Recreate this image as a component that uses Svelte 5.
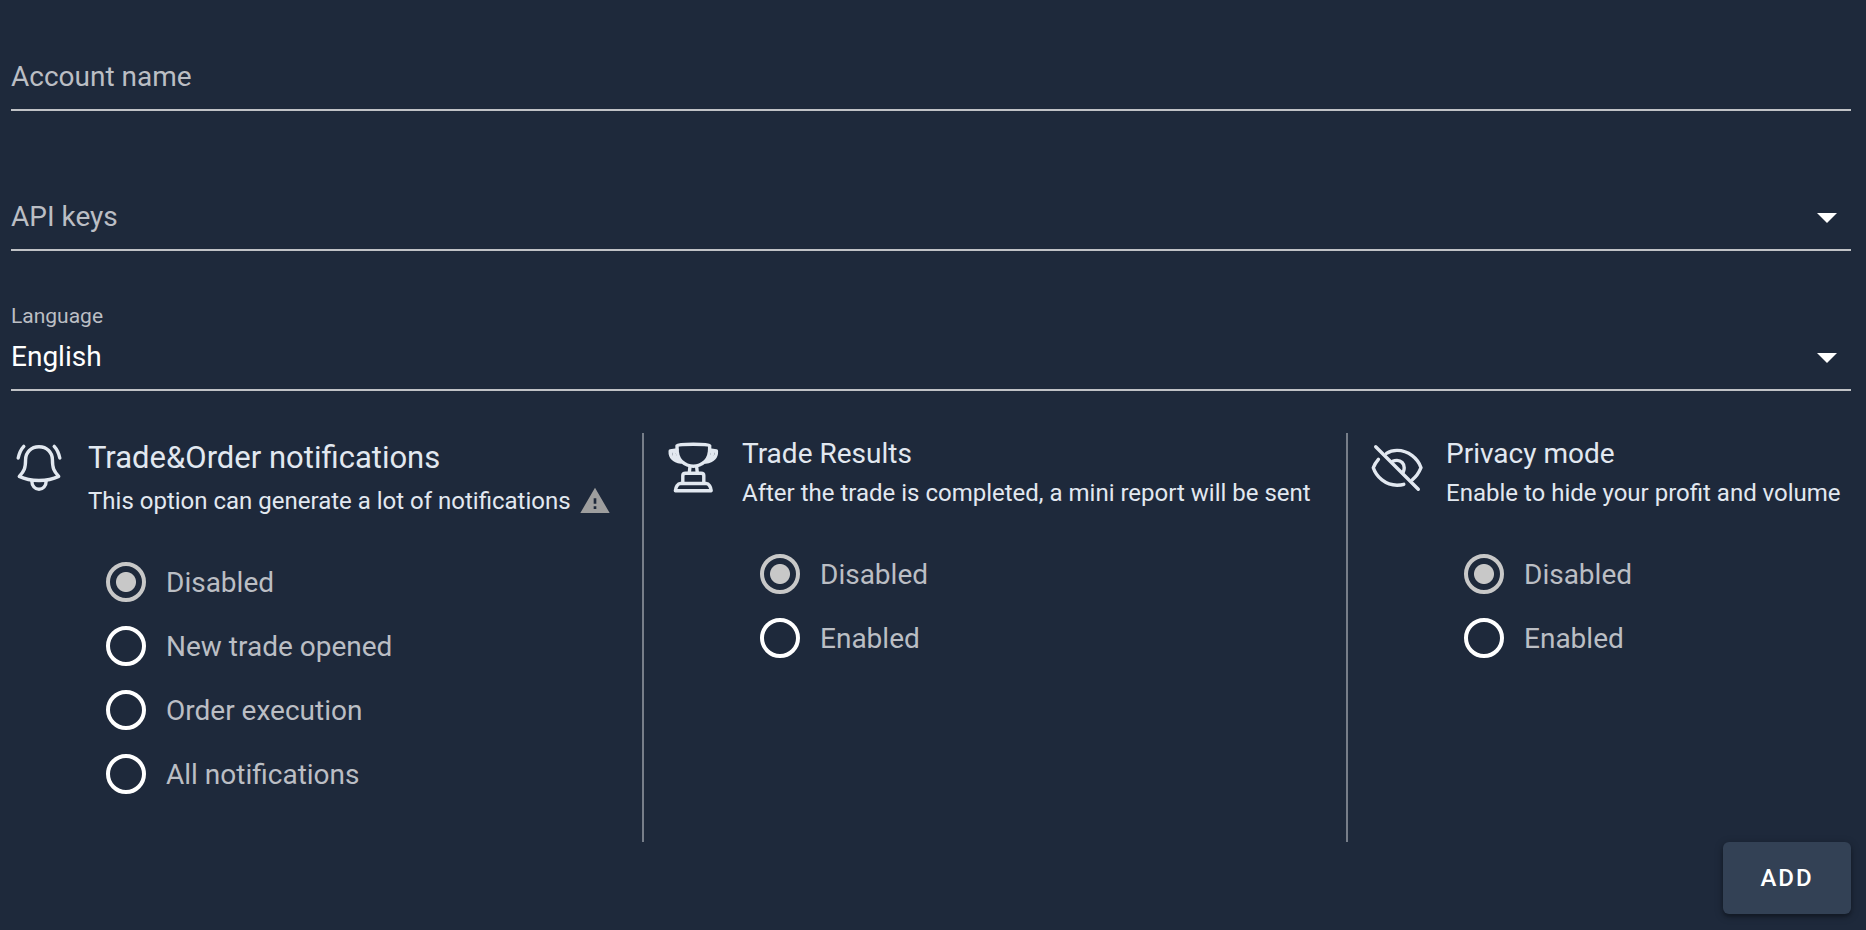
<script>
  let accountName = $state('');
  let apiKey = $state('');
  let language = $state('English');

  let sections = $state([
    {
      id: 'orders',
      icon: 'bell',
      title: 'Trade&Order notifications',
      text: 'This option can generate a lot of notifications',
      large: true,
      warning: true,
      options: ['Disabled', 'New trade opened', 'Order execution', 'All notifications'],
      value: 'Disabled'
    },
    {
      id: 'results',
      icon: 'trophy',
      title: 'Trade Results',
      text: 'After the trade is completed, a mini report will be sent',
      options: ['Disabled', 'Enabled'],
      value: 'Disabled'
    },
    {
      id: 'privacy',
      icon: 'eye',
      title: 'Privacy mode',
      text: 'Enable to hide your profit and volume',
      options: ['Disabled', 'Enabled'],
      value: 'Disabled'
    }
  ]);
</script>

{#snippet arrow()}
  <svg class="arrow" viewBox="0 0 24 24" aria-hidden="true"><path d="M7 10l5 5 5-5z" /></svg>
{/snippet}

{#snippet picture(name)}
  <svg class="picture" viewBox="0 0 56 56" aria-hidden="true">
    {#if name === 'bell'}
      <path d="M28 6.7C20 6.7 14.7 12.4 14.6 19.5C14.5 28 13.4 31 8.3 36.4C14 39.2 21 40.5 28 40.5S42 39.2 47.7 36.4C42.6 31 41.5 28 41.4 19.5C41.3 12.4 36 6.7 28 6.7Z" />
      <path d="M20.8 40.8C20.8 46 24 49.3 28 49.3S35.2 46 35.2 40.8" />
      <path d="M12.8 6.4C9.8 9.6 8.2 13.4 7.2 18M43.2 6.4C46.2 9.6 47.8 13.4 48.8 18" />
    {:else if name === 'trophy'}
      <path d="M12 5.8C13 4.5 20 4.2 28.3 4.2S43.7 4.5 44.7 5.8C45 14 43.5 18.5 40 21.5C37 24.2 33 26.2 28.3 26.2S19.7 24.2 16.7 21.5C13.2 18.5 11.7 14 12 5.8Z" />
      <path d="M12 10L5.2 11C5 16.5 8 20.8 16 22M12 10L9 12C9 15 11 18.5 14.5 20M44.6 10L51.4 11C51.6 16.5 48.6 20.8 40.6 22M44.6 10L47.6 12C47.6 15 45.6 18.5 42.1 20" />
      <path d="M25 26.4L24.3 32.8M31.6 26.4L32.3 32.8" />
      <path d="M17.8 43V35.5C17.8 34 19 33.3 20.5 33.3H36.1C37.6 33.3 38.8 34 38.8 35.5V43" />
      <path d="M15.5 43.5H41.1C43.8 43.5 46 47 46.2 50.7H10.4C10.6 47 12.8 43.5 15.5 43.5Z" />
    {:else}
      <path d="M6.7 6.7L49.3 49.3" />
      <path d="M17.5 13.4C20.5 11.4 24 10.4 28 10.4C39.5 10.4 49 18.5 52 27.7C50 32.5 47.3 36.7 43.5 39.6" />
      <path d="M9.4 19.3C7 22 5.3 24.8 4.3 27.8C7.3 37 16.5 45.2 28 45.2C30.5 45.2 32.8 45 34.8 44.3" />
      <path d="M23.6 21.3C25.2 20.6 26.5 20.4 28 20.4C32.2 20.4 35.2 23.6 35.2 27.8C35.2 29.3 35 30.6 34.3 32" />
    {/if}
  </svg>
{/snippet}

<form onsubmit={(event) => event.preventDefault()}>
  <div class="fields">
    <div class="field" class:filled={accountName}>
      <label for="account">Account name</label>
      <input id="account" type="text" bind:value={accountName} />
    </div>

    <div class="field" class:filled={apiKey}>
      <label for="keys">API keys</label>
      <select id="keys" bind:value={apiKey}>
        <option value=""></option>
      </select>
      {@render arrow()}
    </div>

    <div class="field" class:filled={language}>
      <label for="language">Language</label>
      <select id="language" bind:value={language}>
        <option>English</option>
      </select>
      {@render arrow()}
    </div>
  </div>

  <div class="sections">
    {#each sections as section (section.id)}
      <section>
        {@render picture(section.icon)}
        <div class="body">
          <h2 id={section.id} class:large={section.large}>{section.title}</h2>
          <p>
            {section.text}
            {#if section.warning}
              <svg class="warning" viewBox="0 0 24 24" aria-hidden="true">
                <path d="M1 21h22L12 2 1 21zm12-3h-2v-2h2v2zm0-4h-2v-4h2v4z" />
              </svg>
            {/if}
          </p>
          <div class="options" role="radiogroup" aria-labelledby={section.id}>
            {#each section.options as option}
              <label>
                <input type="radio" name={section.id} value={option} bind:group={section.value} />
                {option}
              </label>
            {/each}
          </div>
        </div>
      </section>
    {/each}
  </div>

  <div class="actions">
    <button type="submit">ADD</button>
  </div>
</form>

<style>
  :global(body) {
    margin: 0;
    background: #1e293b;
  }

  form {
    padding: 0 15px 16px 11px;
    color: #e2e8f0;
    font-family: Roboto, sans-serif;
    font-size: 28px;
  }

  .fields {
    display: grid;
    gap: 29px;
  }

  .field {
    display: grid;
    grid-template-rows: 43px 66px;
    border-bottom: 2px solid #c0c2c6;
  }

  .field label {
    grid-area: 2 / 1;
    align-self: center;
    color: #bbbec4;
    pointer-events: none;
    z-index: 1;
  }

  .field.filled label,
  .field:focus-within label {
    grid-area: 1 / 1;
    align-self: end;
    font-size: 21px;
    line-height: 14px;
  }

  .field input,
  .field select {
    grid-area: 2 / 1;
    width: 100%;
    margin: 0;
    padding: 0;
    border: 0;
    outline: 0;
    appearance: none;
    background: transparent;
    color: #fff;
    font: inherit;
  }

  .field option {
    background: #1e293b;
  }

  .arrow {
    grid-area: 2 / 1;
    place-self: center end;
    width: 48px;
    height: 48px;
    margin-top: 2px;
    fill: #fff;
    pointer-events: none;
  }

  .sections {
    display: grid;
    grid-template-columns: 633fr 704fr 503fr;
    min-height: 409px;
    margin-top: 42px;
  }

  section {
    display: flex;
    gap: 21px;
  }

  section + section {
    padding-left: 21px;
  }

  section:not(:last-child) {
    border-right: 2px solid #777e89;
  }

  .picture {
    flex: none;
    width: 56px;
    height: 56px;
    margin-top: 7px;
    fill: none;
    stroke: #e2e8f0;
    stroke-width: 3.4;
    stroke-linecap: round;
    stroke-linejoin: round;
  }

  h2 {
    margin: 0;
    font-size: 28px;
    font-weight: 400;
    line-height: 41px;
  }

  h2.large {
    font-size: 31px;
    line-height: 49px;
  }

  p {
    display: flex;
    align-items: center;
    gap: 8px;
    margin: 0;
    font-size: 24px;
    line-height: 38px;
  }

  .warning {
    flex: none;
    width: 32px;
    height: 32px;
    fill: #9e9e9e;
  }

  .options {
    margin: 30px 0 0 18px;
  }

  .options label {
    display: flex;
    align-items: center;
    gap: 20px;
    min-height: 64px;
    color: #bbbec4;
  }

  .options input {
    flex: none;
    width: 40px;
    height: 40px;
    margin: 0;
    border: 4px solid #fff;
    border-radius: 50%;
    appearance: none;
  }

  .options input:checked {
    border-color: #c8c8c8;
    background: radial-gradient(circle, #c8c8c8 0 9.5px, transparent 10.5px);
  }

  .actions {
    display: flex;
    justify-content: flex-end;
  }

  button {
    min-width: 128px;
    height: 72px;
    padding: 0 32px;
    border: 0;
    border-radius: 6px;
    background: #334155;
    box-shadow: 0 2px 8px rgba(0, 0, 0, 0.3), 0 3px 3px rgba(0, 0, 0, 0.2);
    color: #fff;
    font: 500 24px Roboto, sans-serif;
    letter-spacing: 2px;
  }
</style>
